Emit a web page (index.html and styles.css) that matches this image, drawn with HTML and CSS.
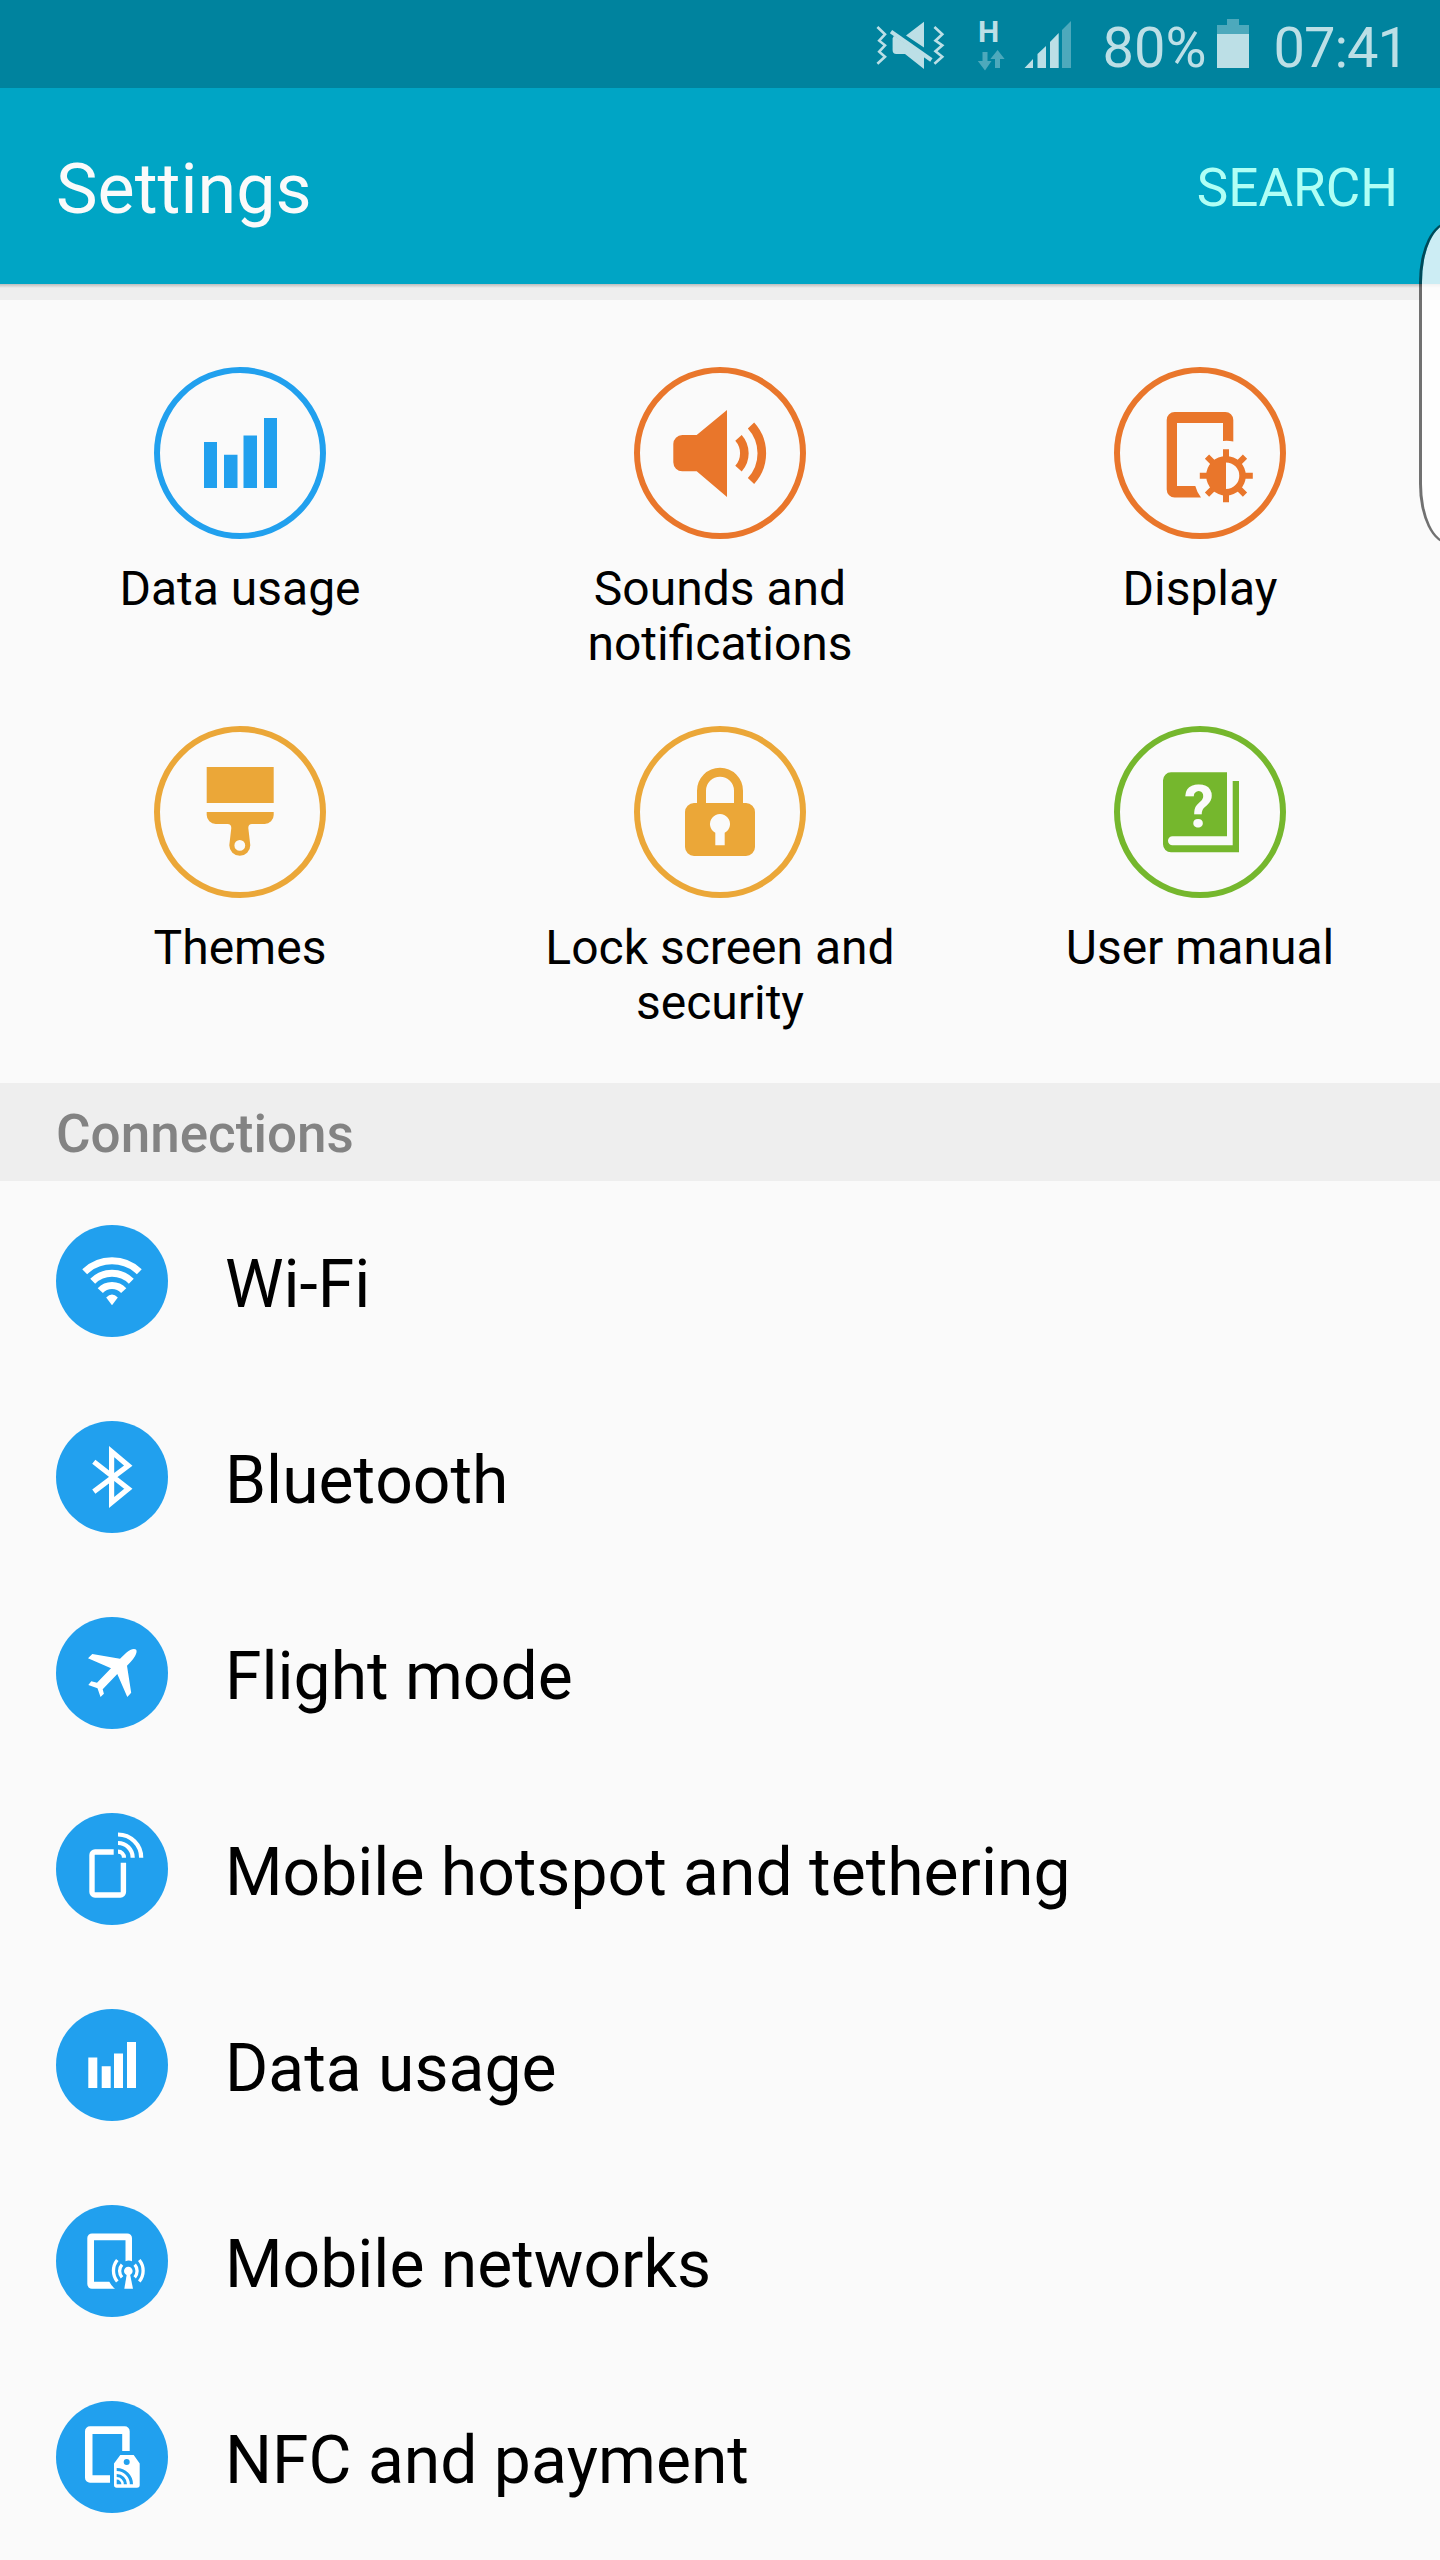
FILE: index.html
```html
<!DOCTYPE html>
<html lang="en">
<head>
    <meta charset="UTF-8">
    <meta name="viewport" content="width=device-width, initial-scale=1.0">
    <title>Settings</title>
    <link rel="stylesheet" href="styles.css">
</head>
<body>
    <div class="screen">
        <div class="status-bar">
            <svg class="mute" width="70" height="50" viewBox="0 0 70 50">
                <g fill="none" stroke="currentColor" stroke-width="2.6">
                    <path d="M1.4 7L9 14.3L3.2 20.7L9 25.3L3.2 31.7L9 36.7L1.4 43.7"/>
                    <path d="M58.4 7L66.3 14.3L59.5 20.7L66.3 25.3L59.5 31.2L66.3 36.7L58.4 43.7"/>
                    <path d="M15 11.7L55.4 40" stroke-width="4"/>
                </g>
                <path fill="currentColor" d="M48 1.7V27.5L30 15.5zM18 15.7L16.6 18.3V30Q16.6 34 20.3 34H29L48 49V36z"/>
            </svg>
            <div class="network">
                <span class="network-type">H</span>
                <svg width="28" height="22" viewBox="0 0 28 22">
                    <path fill="#4da9bc" d="M5.5 3h5v9h4L8 21.5L.8 12h4.7zM18 19V10h-4.6L20.6 1L27.6 10H23V19z"/>
                </svg>
            </div>
            <svg class="signal" width="48" height="48" viewBox="0 0 48 48">
                <path fill="currentColor" d="M.5 48L9 39V48zM13.5 34L22 26V48H13.5zM26 22L34.7 13V48H26z"/>
                <path fill="#4da9bc" d="M38 10L47 1V48H38z"/>
            </svg>
            <span class="status-text">80%</span>
            <svg class="battery" width="32" height="49" viewBox="0 0 32 49">
                <path fill="#4da9bc" d="M10 0h12v6h10v9H0V6h10z"/>
                <path fill="currentColor" d="M0 15h32v34H0z"/>
            </svg>
            <span class="status-text clock">07:41</span>
        </div>

        <div class="app-bar">
            <h1>Settings</h1>
            <a class="search">SEARCH</a>
        </div>
        <div class="divider"></div>

        <div class="quick-grid">
            <div class="tile blue">
                <svg class="ring" viewBox="0 0 172 172" fill="currentColor">
                    <circle cx="86" cy="86" r="83"/>
                    <path d="M50 75h13v46H50zM70 87.7h13.5V121H70zM89.5 68.5H103V121H89.5zM110 51h13v70H110z"/>
                </svg>
                <span>Data usage</span>
            </div>
            <div class="tile orange">
                <svg class="ring" viewBox="0 0 172 172" fill="currentColor">
                    <circle cx="86" cy="86" r="83"/>
                    <path d="M62.7 68L93 43V130L62.7 104.3H48.3a9 9 0 0 1-9-9V77a9 9 0 0 1 9-9z"/>
                    <g fill="none" stroke="currentColor" stroke-width="8.6">
                        <path d="M104.5 70.8A23.3 23.3 0 0 1 104.5 101.7"/>
                        <path d="M117 58.5A41 41 0 0 1 117 114"/>
                    </g>
                </svg>
                <span>Sounds and<br>notifications</span>
            </div>
            <div class="tile orange">
                <svg class="ring" viewBox="0 0 172 172" fill="currentColor">
                    <circle cx="86" cy="86" r="83"/>
                    <path d="M119.3 74.4Q114 73.5 109 74V56H63V119H81.3Q83 125.5 87 130.5H60.7a8 8 0 0 1-8-8V53a8 8 0 0 1 8-8H111.3a8 8 0 0 1 8 8z"/>
                    <!-- sun with half-filled centre -->
                    <path d="M112 82.2V92M112 125.5V135.2M85.8 108.7H95M129 108.7H138.8M93 89.7L100 96.7M131 89.7L124 96.7M93 127.7L100 120.7M131 127.7L124 120.7" stroke="currentColor" stroke-width="6"/>
                    <path fill-rule="evenodd" d="M112 88.9a19.8 19.8 0 1 1 0 39.6a19.8 19.8 0 1 1 0-39.6zM112 95.4V122a13.3 13.3 0 0 0 0-26.6z"/>
                </svg>
                <span>Display</span>
            </div>
            <div class="tile amber">
                <svg class="ring" viewBox="0 0 172 172" fill="currentColor">
                    <circle cx="86" cy="86" r="83"/>
                    <path d="M52.7 41H119.7V77H52.7z"/>
                    <path fill-rule="evenodd" d="M52.7 86H119.7V89a9 9 0 0 1-9 9H98Q94.3 98 94.3 102L96.3 119.3a10.5 10.5 0 0 1-21 0L77.3 102Q77.3 98 73.5 98H61.7a9 9 0 0 1-9-9zM85.8 114a5.4 5.4 0 1 0 0 10.8a5.4 5.4 0 1 0 0-10.8z"/>
                </svg>
                <span>Themes</span>
            </div>
            <div class="tile amber">
                <svg class="ring" viewBox="0 0 172 172" fill="currentColor">
                    <circle cx="86" cy="86" r="83"/>
                    <path d="M67.5 80V64.7a18.5 18.5 0 0 1 37 0V80" fill="none" stroke="currentColor" stroke-width="9"/>
                    <path fill-rule="evenodd" d="M60 77H112a9 9 0 0 1 9 9V121a9 9 0 0 1-9 9H60a9 9 0 0 1-9-9V86a9 9 0 0 1 9-9zM81.3 119.3H90.7V106.8a10 10 0 1 0-9.4 0z"/>
                </svg>
                <span>Lock screen and<br>security</span>
            </div>
            <div class="tile green">
                <svg class="ring" viewBox="0 0 172 172" fill="currentColor">
                    <circle cx="86" cy="86" r="83"/>
                    <path d="M113 46.3V110.3H58.5a4.5 4.5 0 0 0 0 9H118.7V55H125V126.3H57a8 8 0 0 1-8-8V54.3a8 8 0 0 1 8-8z"/>
                    <text class="question" x="85" y="101" text-anchor="middle">?</text>
                </svg>
                <span>User manual</span>
            </div>
        </div>

        <h2 class="section-title">Connections</h2>

        <ul class="list">
            <li>
                <svg class="icon" viewBox="0 0 112 112">
                    <g fill="none" stroke="#fff" stroke-width="7">
                        <path d="M28.7 46.8A39.4 39.4 0 0 1 83.3 46.8"/>
                        <path d="M36.7 56.2A27.5 27.5 0 0 1 75.3 56.2"/>
                        <path d="M44.3 65.7A15.8 15.8 0 0 1 67.7 65.7"/>
                    </g>
                    <path fill="#fff" d="M50.2 72.6Q56 66.2 61.8 72.6L56 80.3z"/>
                </svg>
                <span>Wi-Fi</span>
            </li>
            <li>
                <svg class="icon" viewBox="0 0 112 112">
                    <path fill="none" stroke="#fff" stroke-width="5.2" d="M37.8 40.7L72.3 67.7L55.6 81.5V30.5L72.3 44.7L37.8 70.7"/>
                </svg>
                <span>Bluetooth</span>
            </li>
            <li>
                <svg class="icon" viewBox="0 0 112 112">
                    <path fill="#fff" d="M64 41.7L70 36Q75.5 31.3 79.3 32.3Q81.5 33 80 37Q78.5 41.5 71 48.7L75.2 75.7L71.3 80L61.3 57L46.7 72.3L47.9 76.7L44.5 80L41.5 71.3L32.3 68L35.3 64.3L41 65.7L55 51.3L32 41.3L36.3 37z"/>
                </svg>
                <span>Flight mode</span>
            </li>
            <li>
                <svg class="icon" viewBox="0 0 112 112">
                    <g fill="none" stroke="#fff">
                        <path stroke-width="5.4" d="M57.7 39H39a3 3 0 0 0-3 3V79a3 3 0 0 0 3 3H64.4a3 3 0 0 0 3-3V49.7"/>
                        <path stroke-width="4.2" d="M62 38.7a6 6 0 0 1 6 6M62 30a14.7 14.7 0 0 1 14.7 14.7M62 21.5a23.2 23.2 0 0 1 23.2 23.2"/>
                    </g>
                </svg>
                <span>Mobile hotspot and tethering</span>
            </li>
            <li>
                <svg class="icon" viewBox="0 0 112 112">
                    <path fill="#fff" d="M32.3 48.5h9V79h-9zM45.7 57.2h9V79h-9zM58 44.5h9V79h-9zM71 33h9V79h-9z"/>
                </svg>
                <span>Data usage</span>
            </li>
            <li>
                <svg class="icon" viewBox="0 0 112 112">
                    <path fill="#fff" d="M76 56.2Q72.5 55 69.5 56.2V35.3H38V76.8H53.3Q55.5 81 59 83.8H36a4.7 4.7 0 0 1-4.7-4.7V33.1a4.7 4.7 0 0 1 4.7-4.7H71.3a4.7 4.7 0 0 1 4.7 4.7z"/>
                    <circle fill="#fff" cx="72.3" cy="66" r="4.3"/>
                    <path fill="#fff" d="M71 68H73.8L77 83.8H68.3z"/>
                    <g fill="none" stroke="#fff" stroke-width="3.3">
                        <path d="M66 59.7A9.5 9.5 0 0 0 66 72.3M78.7 59.7A9.5 9.5 0 0 1 78.7 72.3"/>
                        <path d="M61.3 55A17 17 0 0 0 61.3 76.5M83.3 55A17 17 0 0 1 83.3 76.5"/>
                    </g>
                </svg>
                <span>Mobile networks</span>
            </li>
            <li>
                <svg class="icon" viewBox="0 0 112 112">
                    <path fill="#fff" d="M73.7 50H66.2V33H36.5V74.3H54V81.8H34a5 5 0 0 1-5-5V30.3a5 5 0 0 1 5-5H68.7a5 5 0 0 1 5 5z"/>
                    <path fill="#fff" fill-rule="evenodd" d="M64.3 54.1H77.7L83.7 62.5V84a2.7 2.7 0 0 1-2.7 2.7H60.7A2.7 2.7 0 0 1 58 84V62.5zM70.7 58a3 3 0 1 0 0 6a3 3 0 1 0 0-6z"/>
                    <g fill="none" stroke="#21a0ee" stroke-width="3.2">
                        <path d="M60.7 74.5a8.7 8.7 0 0 1 8.7 8.7M60.7 68.5a14.7 14.7 0 0 1 14.7 14.7"/>
                    </g>
                    <path fill="#21a0ee" d="M60.7 78.5a4.7 4.7 0 0 1 4.7 4.7H60.7z"/>
                </svg>
                <span>NFC and payment</span>
            </li>
        </ul>

        <!-- edge panel handle -->
        <div class="edge-handle"></div>
    </div>
</body>
</html>
```
FILE: styles.css
```css
* {
    box-sizing: border-box;
}
body {
    margin: 0;
    font-family: Roboto, "Noto Sans", sans-serif;
    background-color: #fafafa;
    color: #000;
}
svg {
    display: block;
    flex-shrink: 0;
}
.screen {
    position: relative;
    width: 1440px;
    height: 2560px;
    overflow: hidden;
}
.status-bar {
    display: flex;
    align-items: flex-start;
    justify-content: flex-end;
    height: 88px;
    padding-right: 32px;
    background-color: #00839e;
    color: #bcdfe6;
}
.mute {
    margin: 20px 31px 0 0;
}
.network {
    display: flex;
    flex-direction: column;
    align-items: center;
    width: 28px;
    margin: 17px 19px 0 0;
}
.network-type {
    height: 32px;
    margin-right: 4px;
    font-size: 30px;
    font-weight: 700;
    line-height: 30px;
}
.signal {
    margin: 20px 31px 0 0;
}
.status-text {
    font-size: 56px;
    line-height: 66px;
    margin-top: 15px;
}
.clock {
    letter-spacing: -1px;
}
.battery {
    margin: 19px 25px 0 10px;
}
.app-bar {
    display: flex;
    align-items: center;
    justify-content: space-between;
    height: 196px;
    padding: 0 42px 0 56px;
    background-color: #00a5c5;
}
h1 {
    margin: 5px 0 0;
    font-size: 70px;
    font-weight: 400;
    color: #fafafa;
}
.search {
    margin-top: 4px;
    font-size: 53px;
    color: #b0fff5;
}
.divider {
    height: 16px;
    background: linear-gradient(#bdbdbd, #e2e2e2 3px, #eee 4px);
}
.quick-grid {
    display: grid;
    grid-template-columns: repeat(3, 480px);
    grid-auto-rows: 359px;
    height: 783px;
    padding-top: 67px;
}
.tile {
    display: flex;
    flex-direction: column;
    align-items: center;
}
.tile span {
    margin-top: 22px;
    font-size: 48px;
    line-height: 55px;
    text-align: center;
    color: #000;
}
.ring {
    width: 172px;
    height: 172px;
}
.ring > circle {
    fill: none;
    stroke: currentColor;
    stroke-width: 6px;
}
.blue {
    color: #21a0ee;
}
.orange {
    color: #e9762b;
}
.amber {
    color: #eba738;
}
.green {
    color: #75b72d;
}
.question {
    font-size: 60px;
    font-weight: 700;
    fill: #fafafa;
}
.section-title {
    height: 98px;
    margin: 0;
    padding-left: 56px;
    font-size: 53px;
    font-weight: 500;
    line-height: 102px;
    color: #838383;
    background-color: #eee;
}
.list {
    margin: 0;
    padding: 2px 0 0 56px;
    list-style: none;
}
.list li {
    display: flex;
    align-items: center;
    gap: 57px;
    height: 196px;
    font-size: 66px;
    font-kerning: none;
}
.list span {
    margin-top: 6px;
}
.icon {
    width: 112px;
    height: 112px;
    border-radius: 50%;
    background-color: #21a0ee;
}
.edge-handle {
    position: absolute;
    top: 222px;
    right: -40px;
    width: 61px;
    height: 322px;
    border: 2px solid rgba(0, 0, 0, 0.55);
    border-left-width: 3px;
    border-radius: 30px / 60px;
    background-color: rgba(255, 255, 255, 0.8);
    background-clip: padding-box;
}
```
